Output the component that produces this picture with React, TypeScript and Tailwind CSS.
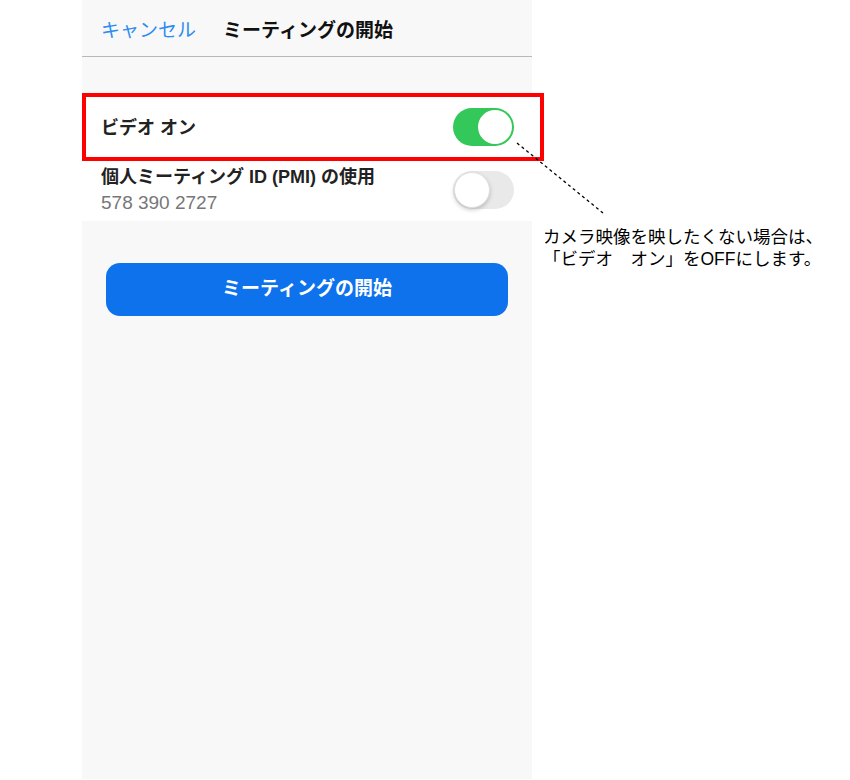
const font = {
  fontFamily: '"Liberation Sans", "Noto Sans CJK JP", sans-serif',
};

function Toggle({ on }: { on: boolean }) {
  return on ? (
    <div className="w-[61px] h-[38px] rounded-full bg-[#34c759] flex items-center justify-end pr-[2px]">
      <div className="w-[34px] h-[34px] rounded-full bg-white" />
    </div>
  ) : (
    <div className="w-[61px] h-[38px] rounded-full bg-[#e9e9ea] flex items-center pl-[1px]">
      <div className="w-[36px] h-[36px] rounded-full bg-white shadow-[0_2px_4px_rgba(0,0,0,0.2)] border border-[#e0e0e0]" />
    </div>
  );
}

export default function App() {
  return (
    <div className="relative w-[850px] h-[780px] bg-white flex" style={font}>
      <div className="w-[82px] shrink-0" />

      <div className="w-[450px] h-[779px] shrink-0 bg-[#f8f8f8] flex flex-col">
        <div className="h-[57px] shrink-0 flex items-center pt-[7px] pl-[19px] gap-[27px] border-b border-[#b8b8b8]">
          <span className="text-[19px] text-[#2d8cf0]">キャンセル</span>
          <span className="text-[19px] font-bold text-[#111]">ミーティングの開始</span>
        </div>

        <div className="h-[38px] shrink-0" />

        <div className="bg-white">
          <div className="h-[63px] flex items-center justify-between pl-[19px] pr-[18px]">
            <span className="text-[18px] font-bold text-[#222] pt-[3px]">ビデオ オン</span>
            <Toggle on />
          </div>
          <div className="h-[63px] flex items-center justify-between pl-[19px] pr-[18px]">
            <div className="flex flex-col leading-[26px]">
              <span className="text-[18px] font-bold text-[#222]">個人ミーティング ID (PMI) の使用</span>
              <span className="text-[19px] text-[#777]">578 390 2727</span>
            </div>
            <Toggle on={false} />
          </div>
        </div>

        <div className="px-[24px] pt-[42px]">
          <button className="w-full h-[53px] rounded-[14px] bg-[#0e72ed] text-white text-[19px] font-bold">
            ミーティングの開始
          </button>
        </div>
      </div>

      <div className="ml-[11px] mt-[226px] text-[17.5px] leading-[22px] text-black whitespace-nowrap">
        <p>カメラ映像を映したくない場合は、</p>
        <p>「ビデオ　オン」をOFFにします。</p>
      </div>

      <div className="absolute left-[82px] top-[93px] w-[462px] h-[68px] border-4 border-[#ff0000] pointer-events-none" />

      <svg className="absolute left-0 top-0 pointer-events-none" width="850" height="780">
        <line x1="517" y1="143" x2="603" y2="213" stroke="#000" strokeWidth="1.3" strokeDasharray="3 3" />
      </svg>
    </div>
  );
}
